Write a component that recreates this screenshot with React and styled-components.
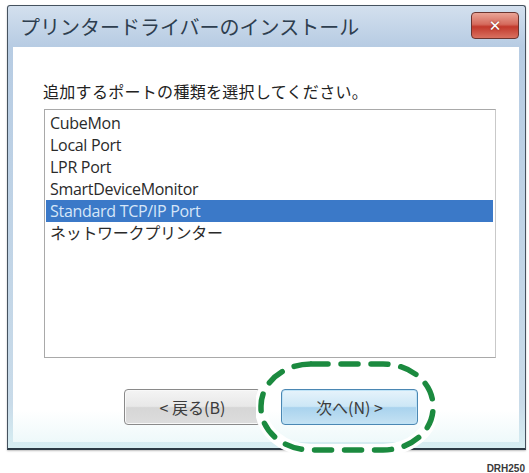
import React from 'react';
import styled, { createGlobalStyle } from 'styled-components';

const ports = [
  'CubeMon',
  'Local Port',
  'LPR Port',
  'SmartDeviceMonitor',
  'Standard TCP/IP Port',
  'ネットワークプリンター',
];

const App = () => {
  const [selected, setSelected] = React.useState(4);
  return (
    <Page>
      <GlobalStyle />
      <Window>
        <TitleBar>
          <Title>プリンタードライバーのインストール</Title>
          <CloseButton aria-label="close">✕</CloseButton>
        </TitleBar>
        <Body>
          <Prompt>追加するポートの種類を選択してください。</Prompt>
          <ListBox>
            {ports.map((name, i) => (
              <Item key={name} $active={i === selected} onClick={() => setSelected(i)}>
                {name}
              </Item>
            ))}
          </ListBox>
          <Buttons>
            <Button>&lt; 戻る(B)</Button>
            <Button $primary>次へ(N) &gt;</Button>
          </Buttons>
        </Body>
      </Window>
      <Callout viewBox="0 0 182 96" width="182" height="96">
        <rect x="5" y="5" width="172" height="86" rx="50" ry="42"
          fill="none" stroke="#fff" strokeWidth="12" />
        <rect x="5" y="5" width="172" height="86" rx="50" ry="42"
          fill="none" stroke="#1b8a3f" strokeWidth="5.5"
          strokeDasharray="17 13" strokeLinecap="round" />
      </Callout>
      <FigureId>DRH250</FigureId>
    </Page>
  );
};

/* CSS */
const GlobalStyle = createGlobalStyle`
  html, body {
    margin: 0;
    background: #fff;
  }
  body {
    font-family: "Open Sans", "Noto Sans CJK JP", sans-serif;
  }
`;

const Page = styled.div`
  position: relative;
  width: 529px;
  height: 473px;
  padding: 5px 0 0 7px;
  box-sizing: border-box;
  overflow: hidden;
`;

const Window = styled.div`
  width: 519px;
  height: 445px;
  box-sizing: border-box;
  display: flex;
  flex-direction: column;
  border: 1px solid #45525f;
  border-bottom: 2px solid #2b3944;
  border-radius: 3px 3px 0 0;
  background: linear-gradient(#d3e0ee, #b7cce3 40px, #c9dbe9 90%, #d7eef2);
  padding: 0 6px 6px 5px;
  box-shadow: 0 1px 2px rgba(0, 0, 0, 0.25);
`;

const TitleBar = styled.div`
  height: 41px;
  flex: none;
  display: flex;
  align-items: center;
  justify-content: space-between;
  padding: 0 0 0 7px;
`;

const Title = styled.div`
  font-family: "Noto Sans CJK JP", sans-serif;
  font-size: 20px;
  color: #2e3e4f;
`;

const CloseButton = styled.div`
  width: 48px;
  height: 27px;
  margin-top: -2px;
  box-sizing: border-box;
  display: flex;
  align-items: center;
  justify-content: center;
  border: 1px solid #6b3530;
  border-radius: 4px;
  background: linear-gradient(#eaa597, #d56b5d 45%, #c2392c 55%, #d9705f);
  color: #fff;
  font-family: "DejaVu Sans", sans-serif;
  font-size: 15px;
  font-weight: bold;
  text-shadow: 0 0 2px #7a2a22;
`;

const Body = styled.div`
  flex: 1;
  display: flex;
  flex-direction: column;
  background: linear-gradient(#fff 92%, #eef9fa);
  padding: 0 0 0 30px;
`;

const Prompt = styled.div`
  font-family: "Noto Sans CJK JP", sans-serif;
  font-size: 16px;
  color: #222;
  margin-top: 33px;
  line-height: 22px;
  letter-spacing: 0.3px;
`;

const ListBox = styled.div`
  width: 452px;
  height: 249px;
  box-sizing: border-box;
  margin-top: 7px;
  margin-left: 1px;
  border: 1px solid #a9a9a9;
  border-right-color: #c9c9c9;
  padding: 2px 2px 0 1px;
  background: #fff;
`;

const Item = styled.div`
  height: 22px;
  line-height: 22px;
  padding-left: 4px;
  font-size: 16px;
  letter-spacing: -0.3px;
  color: ${({ $active }) => ($active ? '#d6e6f8' : '#2a2a2a')};
  background: ${({ $active }) => ($active ? '#3b79c8' : 'transparent')};
  white-space: nowrap;
  cursor: default;
`;

const Buttons = styled.div`
  display: flex;
  gap: 20px;
  margin-top: 31px;
  margin-left: 81px;
`;

const Button = styled.button`
  width: 137px;
  height: 36px;
  box-sizing: border-box;
  border-radius: 4px;
  border: 1px solid ${({ $primary }) => ($primary ? '#4b87b3' : '#8a8a8a')};
  background: ${({ $primary }) =>
    $primary
      ? 'linear-gradient(#e6f3fb, #cde7f6 48%, #a9d3ee 52%, #c5e2f3)'
      : 'linear-gradient(#f4f4f4, #e8e8e8 48%, #d6d6d6 52%, #dddddd)'};
  box-shadow: inset 0 0 0 1px ${({ $primary }) => ($primary ? '#bfe3f7' : '#f8f8f8')};
  font-family: "Noto Sans CJK JP", sans-serif;
  font-size: 16px;
  color: #3c3c3c;
  padding: 0;
`;

const Callout = styled.svg`
  position: absolute;
  left: 256px;
  top: 359px;
  pointer-events: none;
`;

const FigureId = styled.div`
  text-align: right;
  padding-right: 4px;
  margin-top: 13px;
  font-family: "Liberation Sans", sans-serif;
  font-size: 10px;
  font-weight: bold;
  color: #3a3a3a;
`;
/* end CSS */

export default App;
